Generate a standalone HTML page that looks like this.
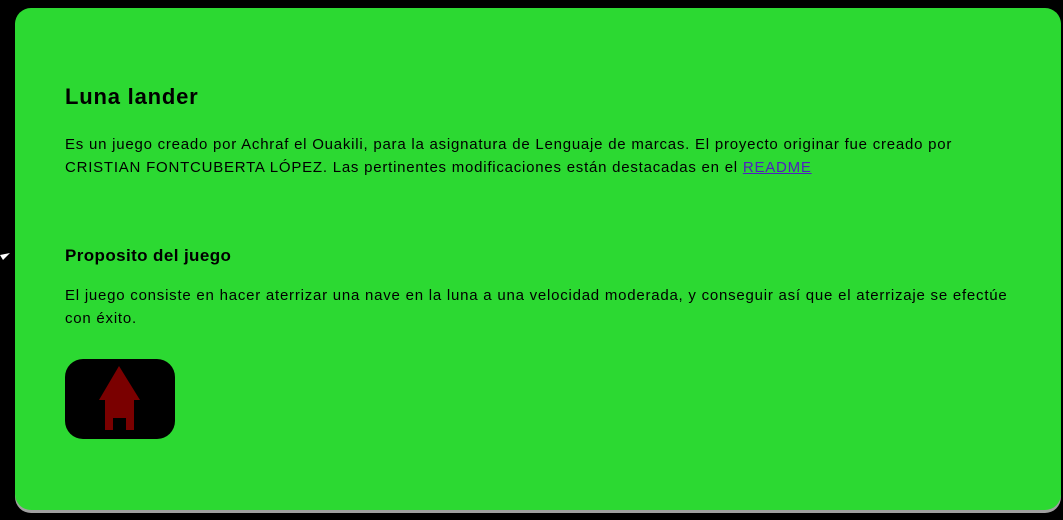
<!DOCTYPE html>
<html><head><meta charset="utf-8"><style>
html,body{margin:0;padding:0;width:1063px;height:520px;overflow:hidden;background:#000;}
body{font-family:"Comic Sans MS","Liberation Sans",sans-serif;color:#000;position:relative;}
.shadow{position:absolute;left:15px;top:10px;width:1046px;height:503px;background:#a0a0a0;border-radius:16px;}
.panel{position:absolute;left:15px;top:8px;width:1046px;height:502px;background:#2cd932;border-radius:16px;}
h1{position:absolute;left:50px;top:76px;margin:0;font-size:22px;font-weight:bold;letter-spacing:0.8px;}
h2{position:absolute;left:50px;top:238px;margin:0;font-size:17px;font-weight:bold;letter-spacing:0.4px;}
p{position:absolute;left:50px;margin:0;font-size:15px;line-height:23px;width:990px;white-space:nowrap;letter-spacing:0.77px;}
a{color:#5020c0;}
.btn{position:absolute;left:50px;top:351px;width:110px;height:80px;background:#000;border-radius:18px;}
.arrow{position:absolute;left:0;top:248px;}
</style></head><body>
<svg class="arrow" width="12" height="20"><path d="M0 7 L10 5 L3 12 Z" fill="#fff"/></svg>
<div class="shadow"></div>
<div class="panel">
<h1>Luna lander</h1>
<p style="top:125px">Es un juego creado por Achraf el Ouakili, para la asignatura de Lenguaje de marcas. El proyecto originar fue creado por<br>CRISTIAN FONTCUBERTA LÓPEZ. Las pertinentes modificaciones están destacadas en el <a href="#">README</a></p>
<h2>Proposito del juego</h2>
<p style="top:276px">El juego consiste en hacer aterrizar una nave en la luna a una velocidad moderada, y conseguir así que el aterrizaje se efectúe<br>con éxito.</p>
<div class="btn"><svg width="110" height="80"><path d="M54 7 L75 41 L69 41 L69 71 L61 71 L61 59 L48 59 L48 71 L40 71 L40 41 L34 41 Z" fill="#7a0000"/></svg></div>
</div>
</body></html>
